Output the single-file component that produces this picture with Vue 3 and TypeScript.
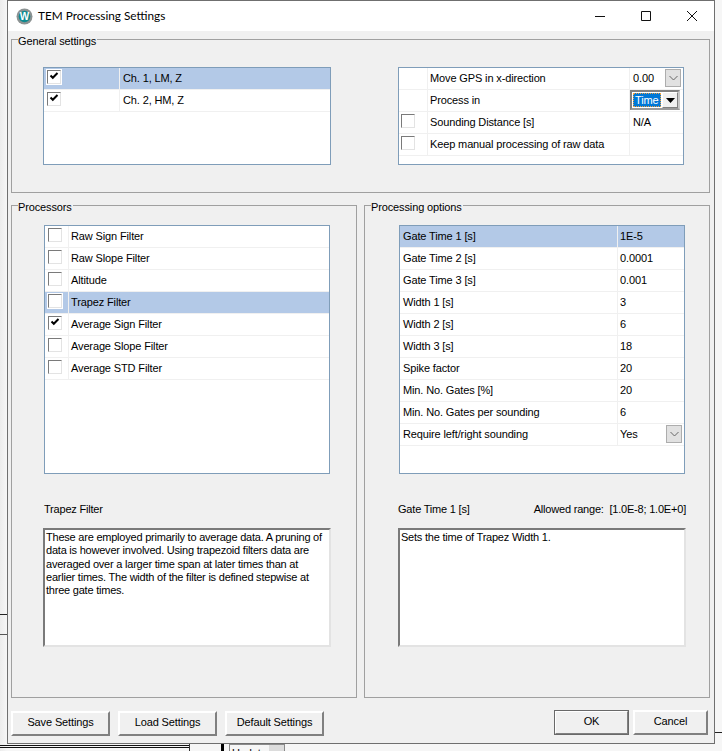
<script setup lang="ts">
const channels = [
  { label: 'Ch. 1, LM, Z', selected: true },
  { label: 'Ch. 2, HM, Z', selected: false },
]
const processors = [
  { label: 'Raw Sign Filter', checked: false, selected: false },
  { label: 'Raw Slope Filter', checked: false, selected: false },
  { label: 'Altitude', checked: false, selected: false },
  { label: 'Trapez Filter', checked: false, selected: true },
  { label: 'Average Sign Filter', checked: true, selected: false },
  { label: 'Average Slope Filter', checked: false, selected: false },
  { label: 'Average STD Filter', checked: false, selected: false },
]
const options = [
  { label: 'Gate Time 1 [s]', value: '1E-5' },
  { label: 'Gate Time 2 [s]', value: '0.0001' },
  { label: 'Gate Time 3 [s]', value: '0.001' },
  { label: 'Width 1 [s]', value: '3' },
  { label: 'Width 2 [s]', value: '6' },
  { label: 'Width 3 [s]', value: '18' },
  { label: 'Spike factor', value: '20' },
  { label: 'Min. No. Gates [%]', value: '20' },
  { label: 'Min. No. Gates per sounding', value: '6' },
  { label: 'Require left/right sounding', value: 'Yes' },
]
</script>

<template>
  <div class="desk">
    <div class="bit line-a"></div>
    <div class="bit line-b"></div>
    <div class="bit line-c"></div>
    <div class="bit line-d"></div>
    <div class="bit line-e"></div>
    <div class="bit vert"></div>
    <div class="bit bar"></div>
    <div class="bit update">Update<span class="update-btn"></span></div>

    <div class="window">
      <header class="titlebar">
        <svg class="logo" width="17" height="17" viewBox="0 0 17 17">
          <circle cx="8.5" cy="8.5" r="8" fill="#8b9292" />
          <circle cx="8.5" cy="8.5" r="5.8" fill="#0e8a90" />
          <text x="8.5" y="12.4" text-anchor="middle" class="logo-w">W</text>
        </svg>
        <span class="title">TEM Processing Settings</span>
        <div class="controls">
          <svg class="ctl" width="46" height="30" viewBox="0 0 46 30"><path d="M18 15.5h10" stroke="#111" fill="none" /></svg>
          <svg class="ctl" width="46" height="30" viewBox="0 0 46 30"><path d="M18.5 10.5h9v9h-9z" stroke="#111" fill="none" /></svg>
          <svg class="ctl" width="46" height="30" viewBox="0 0 46 30"><path d="M18 10l10 10M28 10L18 20" stroke="#111" fill="none" /></svg>
        </div>
      </header>

      <div class="body">
        <section class="group general">
          <span class="legend">General settings</span>
          <div class="list channels">
            <div v-for="c in channels" :key="c.label" class="row" :class="{ sel: c.selected }">
              <div class="cell chan-check">
                <span class="box framed"><svg width="10" height="10" viewBox="0 0 10 10"><path d="M1.500 4.500l2.300 2.300L8.500 2" stroke="#000" stroke-width="2" fill="none" /></svg></span>
              </div>
              <div class="cell grow">{{ c.label }}</div>
            </div>
          </div>
          <div class="list props">
            <div class="row">
              <div class="cell prop-check"></div>
              <div class="cell prop-name">Move GPS in x-direction</div>
              <div class="cell prop-val">0.00
                <span class="drop"><svg width="9" height="6" viewBox="0 0 9 6"><path d="M.5 1l4 4 4-4" stroke="#666" fill="none" /></svg></span>
              </div>
            </div>
            <div class="row">
              <div class="cell prop-check"></div>
              <div class="cell prop-name">Process in</div>
              <div class="cell prop-val combo-cell">
                <div class="combo">
                  <span class="combo-text">Time</span>
                  <span class="combo-btn"><svg width="9" height="5" viewBox="0 0 9 5"><path d="M0 0h9L4.500 5z" fill="#000" /></svg></span>
                </div>
              </div>
            </div>
            <div class="row">
              <div class="cell prop-check"><span class="box"></span></div>
              <div class="cell prop-name">Sounding Distance [s]</div>
              <div class="cell prop-val">N/A</div>
            </div>
            <div class="row">
              <div class="cell prop-check"><span class="box"></span></div>
              <div class="cell prop-name">Keep manual processing of raw data</div>
              <div class="cell prop-val"></div>
            </div>
          </div>
        </section>

        <div class="columns">
          <section class="group column">
            <span class="legend">Processors</span>
            <div class="list tall">
              <div v-for="p in processors" :key="p.label" class="row" :class="{ sel: p.selected }">
                <div class="cell proc-check">
                  <span class="box" :class="{ framed: p.selected }">
                    <svg v-if="p.checked" width="10" height="10" viewBox="0 0 10 10"><path d="M1.500 4.500l2.300 2.300L8.500 2" stroke="#000" stroke-width="2" fill="none" /></svg>
                  </span>
                </div>
                <div class="cell grow proc-name">{{ p.label }}</div>
              </div>
            </div>
            <div class="caption"><span>Trapez Filter</span></div>
            <div class="memo">These are employed primarily to average data. A pruning of data is however involved. Using trapezoid filters data are averaged over a larger time span at later times than at earlier times. The width of the filter is defined stepwise at three gate times.</div>
          </section>

          <section class="group column right-col">
            <span class="legend">Processing options</span>
            <div class="list tall opts">
              <div v-for="(o, i) in options" :key="o.label" class="row" :class="{ sel: i === 0 }">
                <div class="cell opt-name">{{ o.label }}</div>
                <div class="cell grow opt-val">{{ o.value }}
                  <span v-if="o.value === 'Yes'" class="drop"><svg width="9" height="6" viewBox="0 0 9 6"><path d="M.5 1l4 4 4-4" stroke="#666" fill="none" /></svg></span>
                </div>
              </div>
            </div>
            <div class="caption"><span>Gate Time 1 [s]</span><span>Allowed range:&nbsp; [1.0E-8; 1.0E+0]</span></div>
            <div class="memo">Sets the time of Trapez Width 1.</div>
          </section>
        </div>

        <footer class="footer">
          <div class="btn-group left">
            <button class="btn">Save Settings</button>
            <button class="btn">Load Settings</button>
            <button class="btn">Default Settings</button>
          </div>
          <div class="btn-group">
            <button class="btn small def">OK</button>
            <button class="btn small">Cancel</button>
          </div>
        </footer>
      </div>
    </div>
  </div>
</template>

<style scoped>
.desk {
  position: relative;
  width: 722px;
  height: 751px;
  overflow: hidden;
  background: linear-gradient(to right, #ececec, #f6f6f6 7px);
  font-family: "Liberation Sans", Arial, sans-serif;
  font-size: 11px;
  letter-spacing: -0.13px;
  color: #000;
}
.bit { position: absolute; }
.line-a { left: 0; top: 614px; width: 7px; height: 1px; background: #222; }
.line-b { left: 0; top: 634px; width: 7px; height: 1px; background: #555; }
.line-c { left: 0; top: 745px; width: 190px; height: 1px; background: #111; }
.line-d { left: 0; top: 747px; width: 190px; height: 1px; background: #111; }
.line-e { left: 714px; top: 732px; width: 8px; height: 1px; background: #222; }
.vert { left: 189px; top: 744px; width: 1px; height: 7px; background: #333; }
.bar { left: 221px; top: 744px; width: 3px; height: 7px; background: #000; }
.update {
  left: 229px;
  top: 744px;
  width: 56px;
  height: 14px;
  border: 1px solid #8a8a8a;
  padding-left: 2px;
  line-height: 16px;
  box-sizing: border-box;
}
.update-btn {
  position: absolute;
  right: 0;
  top: 0;
  width: 15px;
  height: 14px;
  background: #dcdcdc;
}

.window {
  position: relative;
  margin-left: 7px;
  width: 708px;
  height: 744px;
  box-sizing: border-box;
  border: 1px solid #6f6f6f;
  background: #f0f0f0;
}
.titlebar {
  display: flex;
  align-items: center;
  height: 30px;
  background: #fff;
  padding-left: 8px;
}
.logo { flex: none; }
.logo-w { font-family: "Liberation Sans", sans-serif; font-size: 10px; font-weight: 700; fill: #fff; }
.title {
  margin: 0 0 2px 5px;
  font-size: 11.800px;
  letter-spacing: 0;
  font-family: Lato, "Noto Sans", sans-serif;
}
.controls {
  display: flex;
  margin-left: auto;
  margin-right: -1px;
}
.ctl { display: block; }

.body { padding: 8px 4px 0 3px; }

.group {
  position: relative;
  box-sizing: border-box;
  border: 1px solid #a0a0a0;
}
.legend {
  position: absolute;
  left: 6px;
  top: -6px;
  line-height: 14px;
  padding-right: 1px;
  background: #f0f0f0;
}
.general {
  height: 154px;
  display: flex;
  justify-content: space-between;
  align-items: flex-start;
  padding: 27px 25px 0 31px;
}
.list {
  box-sizing: border-box;
  border: 1px solid #7f9db9;
  background: #fff;
}
.channels { width: 288px; height: 98px; }
.props { width: 286px; height: 98px; }
.row {
  display: flex;
  height: 22px;
  box-sizing: border-box;
  border-bottom: 1px solid #f0f0f0;
}
.row.sel { background: #b3c9e7; border-bottom-color: #f0f0f0; }
.cell {
  position: relative;
  display: flex;
  align-items: center;
  box-sizing: border-box;
  height: 100%;
  padding-bottom: 2px;
  border-right: 1px solid #f0f0f0;
  white-space: nowrap;
}
.grow { flex: 1; border-right: 0; }
.chan-check { width: 76px; padding-left: 3px; }
.channels .grow { padding-left: 3px; }
.prop-check { width: 29px; padding-left: 2px; }
.prop-name { width: 202px; padding-left: 2px; }
.prop-val { flex: 1; padding-left: 3px; border-right: 0; }
.combo-cell { padding: 0; align-items: flex-start; }
.box {
  display: flex;
  align-items: center;
  justify-content: center;
  width: 14px;
  height: 14px;
  margin-top: -2px;
  box-sizing: border-box;
  background: #fff;
  border: 1px solid #e3e3e3;
  border-top-color: #7a7a7a;
  border-left-color: #7a7a7a;
}
.box svg { display: block; margin: -2px 0 0 0; }
.framed { outline: 1px solid #fff; }
.drop {
  position: absolute;
  right: 2px;
  top: 1px;
  width: 16px;
  height: 18px;
  box-sizing: border-box;
  display: flex;
  align-items: center;
  justify-content: center;
  background: #e1e1e1;
  border: 1px solid #adadad;
}
.combo {
  display: flex;
  align-items: center;
  width: 50px;
  height: 20px;
  box-sizing: border-box;
  border: 2px solid #808080;
  border-right-color: #c8c8c8;
  border-bottom-color: #9a9a9a;
  background: #fff;
}
.combo-text {
  width: 29px;
  height: 14px;
  margin-left: 1px;
  box-sizing: border-box;
  background: #0078d7;
  border: 1px dotted #f0a040;
  color: #fff;
  line-height: 12px;
  padding-left: 1px;
}
.combo-btn {
  display: flex;
  align-items: center;
  justify-content: center;
  width: 16px;
  height: 16px;
  margin-left: 1px;
  box-sizing: border-box;
  background: #f0f0f0;
  border: 1px solid #fff;
  border-right-color: #808080;
  border-bottom-color: #808080;
}

.columns {
  display: flex;
  gap: 7px;
  margin-top: 12px;
}
.column {
  width: 346px;
  height: 493px;
  padding: 19px 0 0 31px;
}
.right-col { padding-left: 33px; }
.tall {
  width: 286px;
  height: 249px;
  margin-left: 1px;
}
.proc-check { width: 24px; padding-left: 3px; }
.proc-name { padding-left: 2px; }
.opt-name { width: 218px; padding-left: 3px; }
.opt-val { padding-left: 2px; }
.caption {
  display: flex;
  justify-content: space-between;
  width: 288px;
  margin-top: 28px;
  line-height: 14px;
  letter-spacing: -0.2px;
}
.column:not(.right-col) .caption { padding-left: 1px; box-sizing: border-box; }
.memo {
  box-sizing: border-box;
  width: 288px;
  height: 119px;
  margin-top: 12px;
  padding: 1px 1px;
  background: #fff;
  border: 2px solid #e3e3e3;
  border-top-color: #7a7a7a;
  border-left-color: #7a7a7a;
  line-height: 13.300px;
  letter-spacing: -0.22px;
}

.footer {
  display: flex;
  justify-content: space-between;
  margin-top: 12px;
  padding-right: 2px;
}
.btn-group { display: flex; gap: 8px; }
.btn-group:not(.left) { gap: 4px; }
.left { margin-top: 1px; }
.btn {
  width: 99px;
  height: 25px;
  padding: 0 0 3px;
  box-sizing: border-box;
  background: #f0f0f0;
  border: 2px solid #fff;
  border-right-color: #808080;
  border-bottom-color: #808080;
  font: inherit;
  letter-spacing: inherit;
  color: #000;
}
.small { width: 75px; }
.def { outline: 1px solid #696969; outline-offset: -1px; }
</style>
